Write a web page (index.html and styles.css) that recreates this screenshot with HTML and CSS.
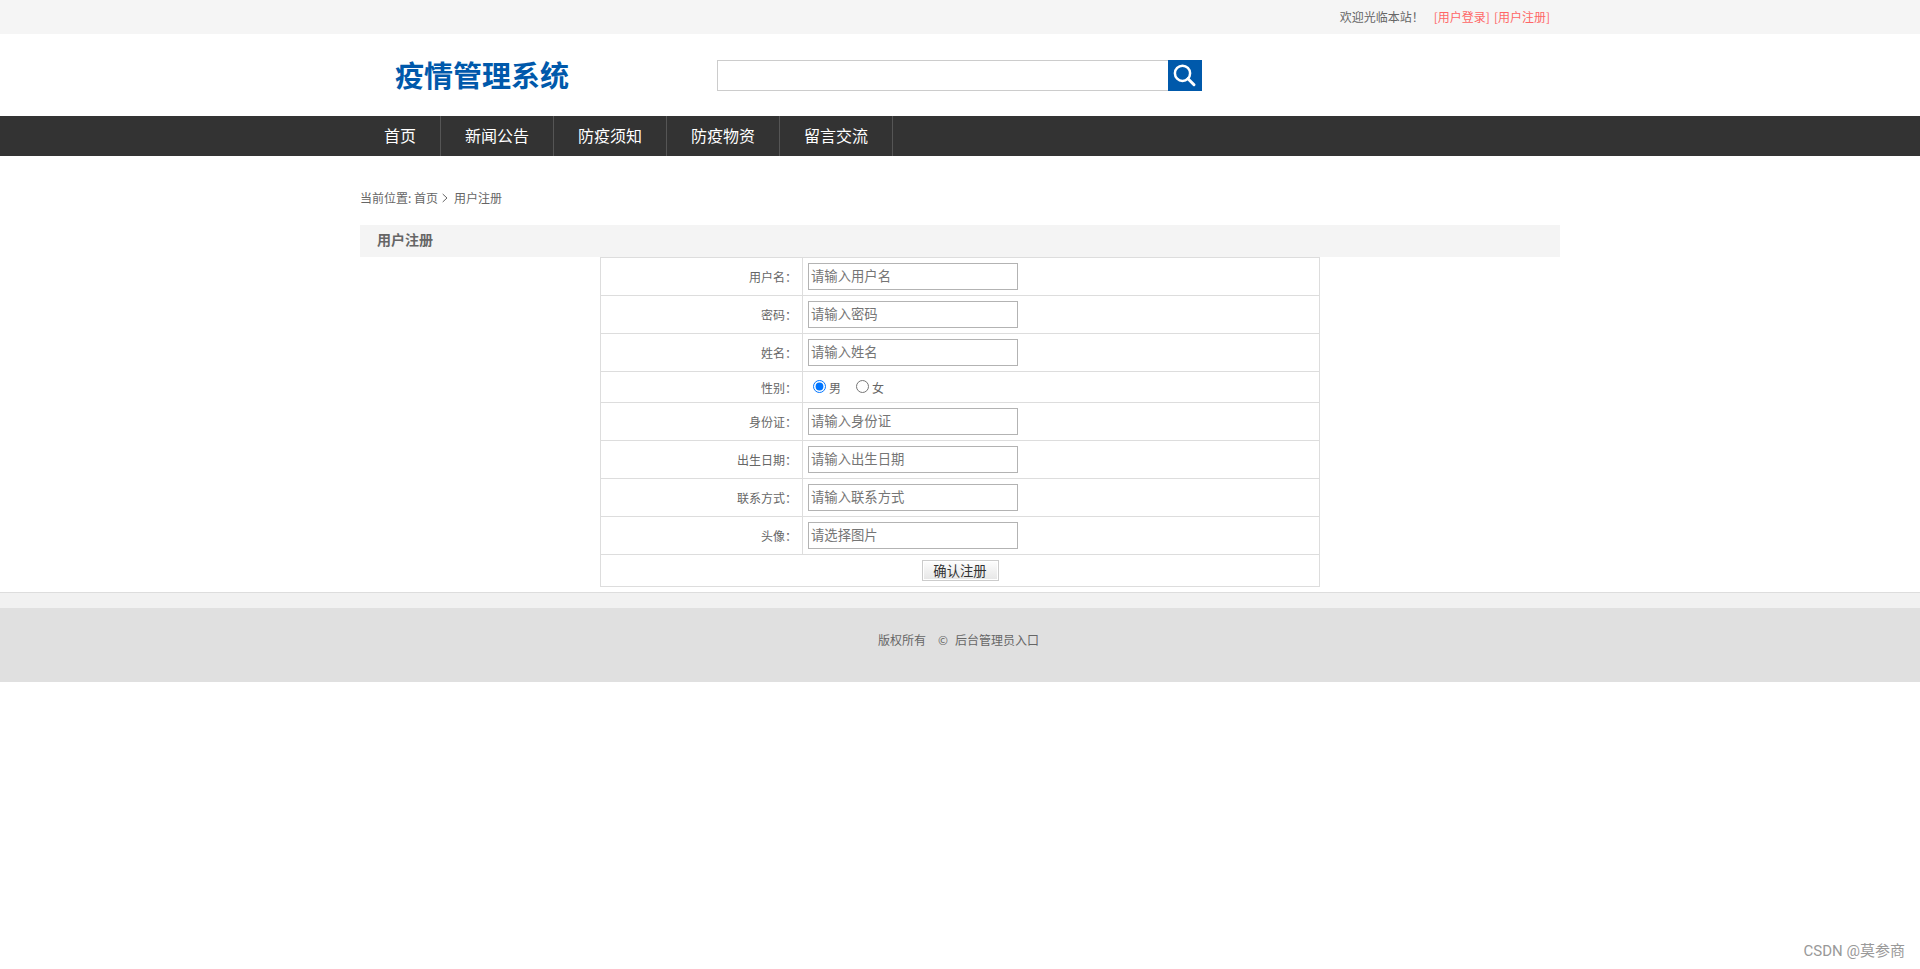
FILE: index.html
```html
<!DOCTYPE html>
<html lang="zh-CN">
<head>
<meta charset="utf-8">
<title>用户注册</title>
<link rel="stylesheet" href="styles.css">
</head>
<body>
<div class="topbar"><div class="wrap topbar-inner">
  <span class="welcome">欢迎光临本站！</span><a class="auth">[用户登录]</a><a class="auth">[用户注册]</a>
</div></div>
<header class="wrap header">
  <div class="logo">疫情管理系统</div>
  <form class="search">
    <input class="search-input" type="text">
    <button class="search-btn" type="button"><svg width="34" height="31" viewBox="0 0 34 31" fill="none" stroke="#fff"><circle cx="14.5" cy="13.3" r="7.6" stroke-width="2.5"/><path d="M20 18.7l6 6" stroke-width="3" stroke-linecap="round"/></svg></button>
  </form>
</header>
<nav class="nav"><div class="wrap nav-inner">
  <a class="nav-item nav-home">首页</a><a class="nav-item">新闻公告</a><a class="nav-item">防疫须知</a><a class="nav-item">防疫物资</a><a class="nav-item">留言交流</a>
</div></nav>
<main class="wrap">
  <div class="crumbs"><span class="crumb-label">当前位置:</span><span>首页</span><svg class="crumb-arrow" width="6" height="10" viewBox="0 0 6 10" fill="none" stroke="#666"><path d="M.7 1L5 5 .7 9"/></svg><span>用户注册</span></div>
  <h1 class="title">用户注册</h1>
  <form class="form">
    <div class="row"><label class="label">用户名：</label><div class="cell"><input class="field" placeholder="请输入用户名"></div></div>
    <div class="row"><label class="label">密码：</label><div class="cell"><input class="field" placeholder="请输入密码"></div></div>
    <div class="row"><label class="label">姓名：</label><div class="cell"><input class="field" placeholder="请输入姓名"></div></div>
    <div class="row row-short"><label class="label">性别：</label><div class="cell">
      <label class="choice"><input class="radio" type="radio" name="sex" checked><span class="choice-text">男</span></label>
      <label class="choice"><input class="radio" type="radio" name="sex"><span class="choice-text">女</span></label></div></div>
    <div class="row"><label class="label">身份证：</label><div class="cell"><input class="field" placeholder="请输入身份证"></div></div>
    <div class="row"><label class="label">出生日期：</label><div class="cell"><input class="field" placeholder="请输入出生日期"></div></div>
    <div class="row"><label class="label">联系方式：</label><div class="cell"><input class="field" placeholder="请输入联系方式"></div></div>
    <div class="row"><label class="label">头像：</label><div class="cell"><input class="field" placeholder="请选择图片"></div></div>
    <div class="row row-submit"><button class="submit" type="button">确认注册</button></div>
  </form>
</main>
<div class="strip"></div>
<footer class="footer"><span>版权所有</span><span class="copy">©</span><span>后台管理员入口</span></footer>
<div class="watermark">CSDN @莫参商</div>
</body>
</html>
```
FILE: styles.css
```css
* { box-sizing: border-box; }
body { margin: 0; background: #fff; color: #666; font: 12px/18px "Noto Sans CJK SC", sans-serif; }
input, button { font-family: inherit; margin: 0; }
.wrap { width: 1200px; margin: 0 auto; }
.topbar { background: #f5f5f5; }
.topbar-inner { height: 34px; display: flex; align-items: center; justify-content: flex-end; padding-right: 10px; }
.welcome { margin-right: 6px; }
.auth { color: #ff6666; margin-left: 4px; white-space: nowrap; }
.header { height: 82px; display: flex; padding-top: 26px; }
.logo { width: 357px; padding-left: 35px; font-size: 29px; line-height: 29px; font-weight: 700; color: #0059ab; white-space: nowrap; }
.search { display: flex; height: 31px; }
.search-input { width: 451px; height: 31px; border: 1px solid #ccc; border-right: 0; outline: 0; background: #fff; }
.search-btn { width: 34px; height: 31px; padding: 0; border: 0; background: #0059ab; }
.search-btn svg { display: block; }
.nav { background: #333; }
.nav-inner { display: flex; height: 40px; }
.nav-item { padding: 0 24px; border-right: 1px solid #555; color: #fff; font-size: 16px; line-height: 39px; }
.nav-home { line-height: 38px; }
.crumbs { height: 69px; padding-top: 14px; display: flex; align-items: center; }
.crumb-label { width: 54px; }
.crumb-arrow { margin: 0 6px 0 4px; }
.title { margin: 0; height: 32px; padding-left: 17px; background: #f4f4f4; font-size: 14px; line-height: 29px; font-weight: 600; }
.form { width: 720px; margin: 0 auto 5px; border: 1px solid #ddd; }
.row { display: flex; height: 38px; border-bottom: 1px solid #ddd; }
.row-short { height: 31px; }
.row-submit { height: 31px; border-bottom: 0; justify-content: center; align-items: flex-start; padding-top: 5px; }
.label { width: 201px; padding: 1px 5px 0 0; display: flex; align-items: center; justify-content: flex-end; }
.cell { flex: 1; border-left: 1px solid #ddd; padding-left: 5px; display: flex; align-items: center; }
.field { width: 210px; height: 27px; padding: 0 2px 3px; border: 1px solid #b3b3b3; font-size: 13.333px; outline: 0; }
.field::placeholder { color: #757575; }
.choice { display: flex; align-items: center; width: 43px; padding-left: 5px; }
.radio { width: 13px; height: 13px; flex: none; margin-top: -2px; }
.choice-text { margin: 2px 0 0 3px; }
.submit { width: 77px; height: 21px; padding: 0; border: 1px solid #ccc; background: linear-gradient(#fdfdfd, #e6e6e6); box-shadow: inset 0 0 0 1px #fff; color: #333; font-size: 13.333px; line-height: 17px; }
.strip { height: 16px; background: #f1f1f1; border-top: 1px solid #ddd; }
.footer { height: 74px; background: #e0e0e0; display: flex; justify-content: center; padding: 23px 3px 0 0; }
.copy { margin: 0 7px 0 12px; }
.watermark { position: absolute; right: 15px; bottom: 6px; font: 15px/24px Roboto, "Noto Sans CJK SC", sans-serif; color: #999; }
```
